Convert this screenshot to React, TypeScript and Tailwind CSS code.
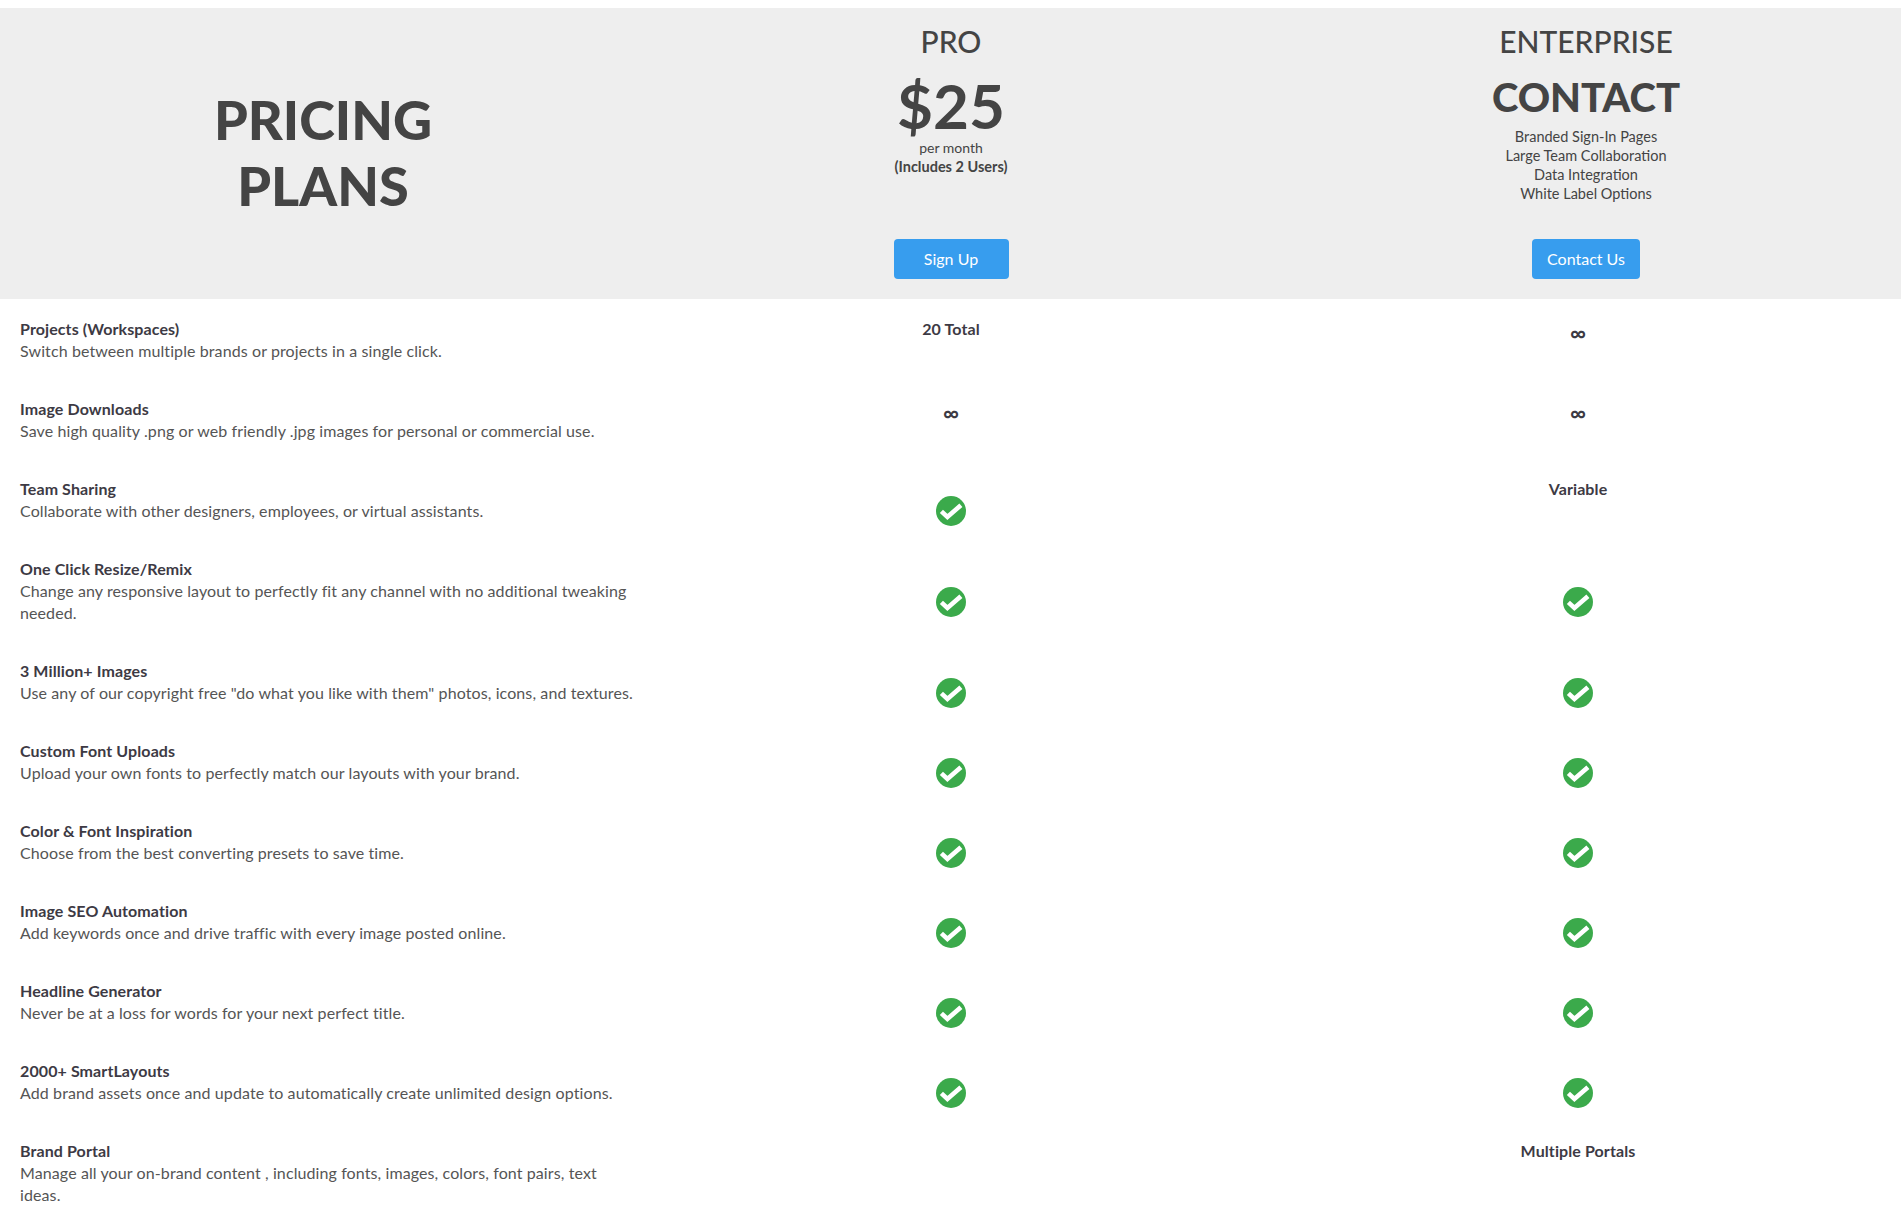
const CHECK = "check";

type Row = { title: string; desc: string; pro: string; ent: string };

const rows: Row[] = [
  { title: "Projects (Workspaces)", desc: "Switch between multiple brands or projects in a single click.", pro: "20 Total", ent: "∞" },
  { title: "Image Downloads", desc: "Save high quality .png or web friendly .jpg images for personal or commercial use.", pro: "∞", ent: "∞" },
  { title: "Team Sharing", desc: "Collaborate with other designers, employees, or virtual assistants.", pro: CHECK, ent: "Variable" },
  { title: "One Click Resize/Remix", desc: "Change any responsive layout to perfectly fit any channel with no additional tweaking needed.", pro: CHECK, ent: CHECK },
  { title: "3 Million+ Images", desc: "Use any of our copyright free \"do what you like with them\" photos, icons, and textures.", pro: CHECK, ent: CHECK },
  { title: "Custom Font Uploads", desc: "Upload your own fonts to perfectly match our layouts with your brand.", pro: CHECK, ent: CHECK },
  { title: "Color & Font Inspiration", desc: "Choose from the best converting presets to save time.", pro: CHECK, ent: CHECK },
  { title: "Image SEO Automation", desc: "Add keywords once and drive traffic with every image posted online.", pro: CHECK, ent: CHECK },
  { title: "Headline Generator", desc: "Never be at a loss for words for your next perfect title.", pro: CHECK, ent: CHECK },
  { title: "2000+ SmartLayouts", desc: "Add brand assets once and update to automatically create unlimited design options.", pro: CHECK, ent: CHECK },
  { title: "Brand Portal", desc: "Manage all your on-brand content , including fonts, images, colors, font pairs, text ideas.", pro: "", ent: "Multiple Portals" },
];

function Check() {
  return (
    <svg width="30" height="30" viewBox="0 0 30 30" className="block">
      <circle cx="15" cy="15" r="15" fill="#3BAA4B" />
      <path d="M5.4 15.4 L11.4 21 L24.9 9.2" fill="none" stroke="#ffffff" strokeWidth="4.6" />
    </svg>
  );
}

function Cell({ value }: { value: string }) {
  if (value === CHECK) {
    return (
      <div className="flex justify-center items-center pt-1 h-full">
        <Check />
      </div>
    );
  }
  if (value === "∞") {
    return <div className="text-center text-[22px] leading-[28px] font-bold text-[#3d3a44]">∞</div>;
  }
  return <div className="text-center text-[16px] leading-[22px] tracking-[0.1px] font-bold text-[#3d3a44] -mt-[1px]">{value}</div>;
}

export default function App() {
  return (
    <div className="h-screen overflow-hidden bg-white pt-2 font-['Lato',sans-serif] text-[#444444]">
      <header className="grid grid-cols-[646px_625px_630px] h-[291px] bg-[#eeeeee]">
        <div className="flex items-center justify-center text-center">
          <h1 className="text-[54px] leading-[66px] font-black -mt-[1px]">
            PRICING
            <br />
            PLANS
          </h1>
        </div>
        <div className="flex flex-col items-center pt-[13px] pr-[15px]">
          <h2 className="text-[30px] leading-[40px] font-medium">PRO</h2>
          <div className="text-[62px] leading-[68px] font-bold mt-[10px]">$25</div>
          <div className="text-[14px] leading-[19px] mt-[-1px]">per month</div>
          <div className="text-[14.5px] leading-[19px] font-bold">(Includes 2 Users)</div>
          <button className="mt-auto mb-5 w-[115px] h-10 rounded bg-[#379DEE] text-white text-[16px] pb-[1px]">Sign Up</button>
        </div>
        <div className="flex flex-col items-center pt-[13px]">
          <h2 className="text-[30px] leading-[40px] font-medium">ENTERPRISE</h2>
          <div className="text-[40px] leading-[52px] font-black mt-[10px]">CONTACT</div>
          <div className="text-[14.5px] leading-[19px] mt-[4px] text-center">
            <div>Branded Sign-In Pages</div>
            <div>Large Team Collaboration</div>
            <div>Data Integration</div>
            <div>White Label Options</div>
          </div>
          <button className="mt-auto mb-5 w-[108px] h-10 rounded bg-[#379DEE] text-white text-[16px] pb-[1px]">Contact Us</button>
        </div>
      </header>
      <main>
        {rows.map((r) => (
          <div key={r.title} className="grid grid-cols-[646px_610px_644px]">
            <div className="pl-5 pr-[10px] pt-[19px] pb-[17px] text-[16px] leading-[22px] tracking-[0.1px]">
              <div className="font-bold text-[#3d3a44]">{r.title}</div>
              <div className="text-[#555555]">{r.desc}</div>
            </div>
            <div className="pt-5"><Cell value={r.pro} /></div>
            <div className="pt-5"><Cell value={r.ent} /></div>
          </div>
        ))}
      </main>
    </div>
  );
}
